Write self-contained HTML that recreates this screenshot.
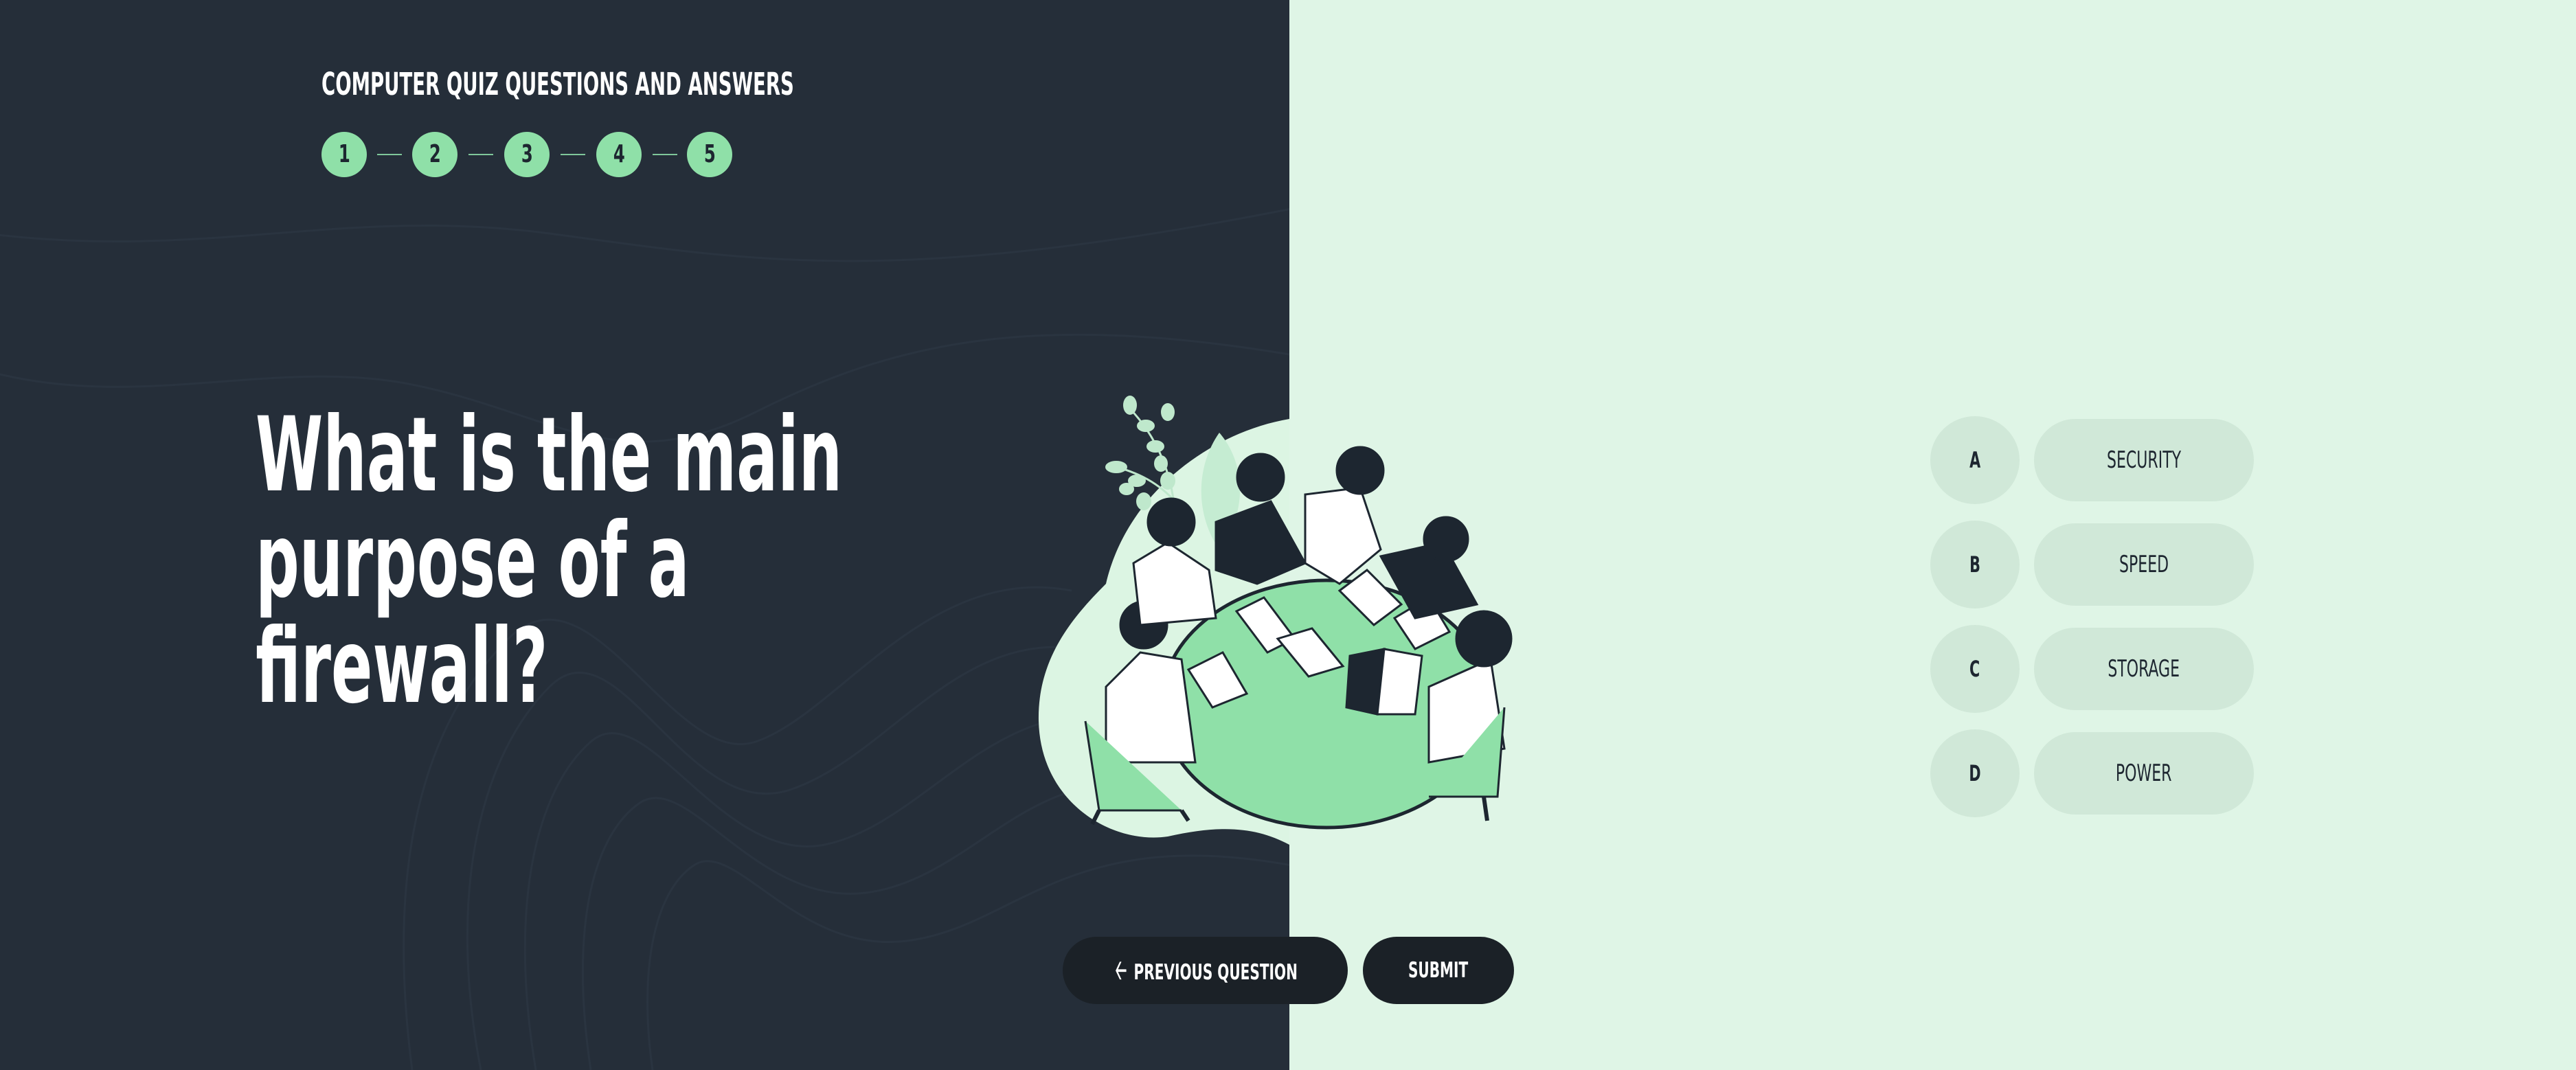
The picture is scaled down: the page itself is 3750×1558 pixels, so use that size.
<!DOCTYPE html>
<html><head><meta charset="utf-8"><style>
*{margin:0;padding:0;box-sizing:border-box}
body{width:3750px;height:1558px;position:relative;overflow:hidden;background:#dff5e6;font-family:"DejaVu Sans Condensed","DejaVu Sans","Liberation Sans",sans-serif;font-weight:bold}
#dark{position:absolute;left:0;top:0;width:1877px;height:1558px;background:#252e39;overflow:hidden}
.t{position:absolute;white-space:nowrap;transform-origin:left top}
.step{position:absolute;top:192px;width:66px;height:66px;border-radius:50%;background:#8fe0a8;color:#1d2630;font-size:36px;line-height:66px;text-align:center}
.step span{display:inline-block;transform:scaleX(.75)}
.ln{position:absolute;top:224px;width:36px;height:2px;background:#7fc79a}
.q{color:#fff;font-size:150px;line-height:150px;transform:scaleX(.66)}
.let{position:absolute;left:2810px;width:130px;height:128px;border-radius:50%;background:#d0e8d8;color:#1d2630;font-size:32px;line-height:128px;text-align:center}
.ans{position:absolute;left:2961px;width:320px;height:120px;border-radius:60px;background:#d0e8d8;color:#1d2630;font-size:34px;line-height:120px;text-align:center;font-weight:normal}
.let span,.ans span,.btn span{display:inline-block;transform:scaleX(.72)}
.btn{position:absolute;top:1364px;height:98px;border-radius:49px;background:#1b2127;color:#fff;font-size:31px;line-height:98px;text-align:center}
</style></head><body>
<div id="dark">
<svg width="1877" height="1558" style="position:absolute;left:0;top:0" fill="none" stroke="#2a3440" stroke-width="3">
<path d="M-20 540 C200 600 400 520 600 560 S900 700 1100 600 1500 450 1900 520"/>
<path d="M-20 340 C300 380 500 300 800 340 S1300 420 1900 300"/>
<path d="M700 1558 C650 1300 700 1100 800 1000 S1000 1200 1150 1150 1400 900 1600 950"/>
<path d="M780 1558 C740 1320 780 1150 860 1080 S1050 1260 1200 1230 1450 1000 1650 1050"/>
<path d="M860 1558 C830 1360 860 1220 930 1170 S1100 1320 1260 1300 1500 1100 1700 1150"/>
<path d="M600 1558 C560 1250 620 1050 740 930 S980 1120 1100 1080 1350 820 1560 860"/>
<path d="M950 1558 C930 1420 950 1300 1010 1260 S1160 1390 1320 1370 1550 1200 1880 1260"/>
</svg>
</div>
<div class="t" style="left:468px;top:96px;color:#fff;font-size:45px;transform:scaleX(.68)">COMPUTER QUIZ QUESTIONS AND ANSWERS</div>
<div class="step" style="left:468px"><span>1</span></div>
<div class="ln" style="left:549px"></div>
<div class="step" style="left:600px"><span>2</span></div>
<div class="ln" style="left:682px"></div>
<div class="step" style="left:734px"><span>3</span></div>
<div class="ln" style="left:816px"></div>
<div class="step" style="left:868px"><span>4</span></div>
<div class="ln" style="left:950px"></div>
<div class="step" style="left:1000px"><span>5</span></div>
<div class="t q" style="left:372px;top:588px">What is the main</div>
<div class="t q" style="left:372px;top:742px">purpose of a</div>
<div class="t q" style="left:372px;top:896px">firewall?</div>

<svg width="3750" height="1558" style="position:absolute;left:0;top:0">
<path d="M1877 610 C1760 630 1640 720 1610 850 C1560 900 1510 960 1512 1050 C1515 1170 1620 1230 1700 1218 C1780 1200 1830 1205 1877 1230 Z" fill="#dcf5e3"/>
<path d="M1775 630 C1810 670 1820 740 1775 800 C1740 750 1740 680 1775 630Z" fill="#c5ecd2"/>
<g stroke="#bfe8cc" stroke-width="3" fill="none"><path d="M1625 680 Q1700 700 1730 760"/><path d="M1640 590 Q1700 650 1710 740"/></g>
<g fill="#bfe8cc"><ellipse cx="1625" cy="680" rx="16" ry="9"/><ellipse cx="1655" cy="700" rx="13" ry="9"/><ellipse cx="1645" cy="590" rx="10" ry="14"/><ellipse cx="1668" cy="620" rx="13" ry="9"/><ellipse cx="1682" cy="650" rx="13" ry="9"/><ellipse cx="1700" cy="700" rx="11" ry="13"/><ellipse cx="1665" cy="730" rx="11" ry="13"/><ellipse cx="1700" cy="600" rx="10" ry="13"/><ellipse cx="1690" cy="675" rx="10" ry="12"/><ellipse cx="1640" cy="712" rx="11" ry="9"/></g>
<ellipse cx="1931" cy="1025" rx="240" ry="180" fill="#8fe0a8" stroke="#1d2630" stroke-width="5"/>
<g fill="#fff" stroke="#1d2630" stroke-width="3">
<path d="M1800 890 L1840 870 L1885 930 L1845 950Z"/><path d="M1860 930 L1910 915 L1955 970 L1905 985Z"/><path d="M1950 860 L1990 830 L2040 880 L2000 910Z"/><path d="M2030 900 L2080 870 L2110 920 L2060 945Z"/><path d="M1730 975 L1780 950 L1815 1010 L1765 1030Z"/>
<path d="M1965 955 L2015 945 L2005 1040 L1960 1030Z" fill="#1d2630"/><path d="M2015 945 L2070 955 L2060 1040 L2005 1040Z"/>
</g>
<g stroke="#1d2630" stroke-width="3">
<path d="M1610 1000 L1660 950 L1720 960 L1740 1110 L1610 1110Z" fill="#fff"/><circle cx="1665" cy="910" r="34" fill="#1d2630"/>
<path d="M1650 820 L1700 790 L1760 830 L1770 900 L1660 910Z" fill="#fff"/><circle cx="1705" cy="760" r="34" fill="#1d2630"/>
<path d="M1770 760 L1850 730 L1900 820 L1830 850 L1770 830Z" fill="#1d2630"/><circle cx="1835" cy="695" r="34" fill="#1d2630"/>
<path d="M1900 720 L1980 710 L2010 800 L1950 850 L1900 820Z" fill="#fff"/><circle cx="1980" cy="685" r="34" fill="#1d2630"/>
<path d="M2010 810 L2100 790 L2150 880 L2060 900Z" fill="#1d2630"/><circle cx="2105" cy="785" r="32" fill="#1d2630"/>
<path d="M2080 1000 L2170 960 L2190 1090 L2080 1110Z" fill="#fff"/><circle cx="2160" cy="930" r="40" fill="#1d2630"/>
<path d="M1580 1050 L1600 1180 L1720 1180 M2190 1030 L2180 1160 L2080 1160" fill="#8fe0a8"/>
<path d="M1600 1180 L1590 1200 M1720 1180 L1730 1195 M2160 1160 L2165 1195" fill="none" stroke-width="6"/>
</g>
</svg>

<div class="let" style="top:606px"><span>A</span></div>
<div class="ans" style="top:610px"><span>SECURITY</span></div>
<div class="let" style="top:758px"><span>B</span></div>
<div class="ans" style="top:762px"><span>SPEED</span></div>
<div class="let" style="top:910px"><span>C</span></div>
<div class="ans" style="top:914px"><span>STORAGE</span></div>
<div class="let" style="top:1062px"><span>D</span></div>
<div class="ans" style="top:1066px"><span>POWER</span></div>

<div class="btn" style="left:1547px;width:415px"><span><span style="font-size:40px">&#129120;</span> PREVIOUS QUESTION</span></div>
<div class="btn" style="left:1984px;width:220px"><span>SUBMIT</span></div>
</body></html>
